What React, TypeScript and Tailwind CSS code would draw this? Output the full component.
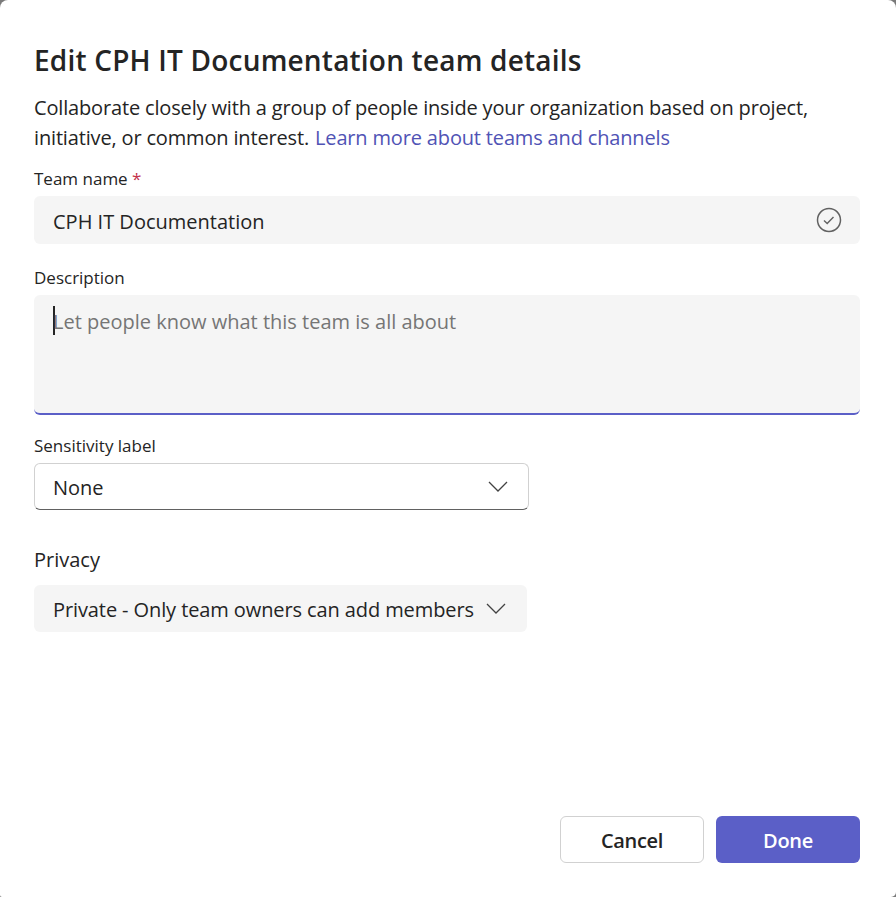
const font = "font-['Open_Sans','Noto_Sans',sans-serif]";

const CheckCircle = () => (
  <svg width="26" height="26" viewBox="0 0 26 26" fill="none" stroke="#616161">
    <circle cx="13" cy="13" r="11.5" strokeWidth="1.5" />
    <path d="M8 13.5l3.2 3.1 6.3-6.6" strokeWidth="1.4" />
  </svg>
);

const Chevron = () => (
  <svg width="20" height="11" viewBox="0 0 20 11" fill="none" stroke="#424242" strokeWidth="1.3">
    <path d="M1 1l9 9 9-9" />
  </svg>
);

export default function App() {
  return (
    <div className="h-[897px] w-[896px] bg-[#7a7a7a]">
      <div className={`flex h-full flex-col rounded-t-lg rounded-br-[5px] rounded-bl-[2px] bg-white pt-[41px] pr-[36px] pb-[34px] pl-[34px] text-[#242424] ${font}`}>
        <h1 className="text-[28px] leading-[38px] font-semibold tracking-[0.2px]">Edit CPH IT Documentation team details</h1>
        <p className="mt-[14px] text-[20px] leading-[30px] tracking-[-0.16px]">
          Collaborate closely with a group of people inside your organization based on project, initiative, or common interest.{" "}
          <span className="ml-[1px] text-[#5053b5]">Learn more about teams and channels</span>
        </p>

        <label className="mt-[14px] text-[17px] leading-[24px]">
          Team name <span className="text-[#c4314b]">*</span>
        </label>
        <div className="mt-[5px] flex h-[48px] items-center justify-between rounded-md bg-[#f5f5f5] pr-[18px] pl-[19px] text-[20px]">
          <span className="pt-[3px]">CPH IT Documentation</span>
          <CheckCircle />
        </div>

        <label className="mt-[22px] text-[17px] leading-[24px]">Description</label>
        <div className="mt-[5px] flex h-[120px] items-start rounded-md border-b-2 border-[#5b5fc7] bg-[#f5f5f5] pt-[11px] pl-[19px] text-[20px] leading-[30px] text-[#757575]">
          <span className="-mr-[2px] h-[29px] w-[2px] bg-[#242424]" />
          <span className="pt-[1px]">Let people know what this team is all about</span>
        </div>

        <label className="mt-[19px] text-[17px] leading-[24px]">Sensitivity label</label>
        <div className="mt-[5px] flex h-[47px] w-[495px] items-center justify-between rounded-md border border-[#d1d1d1] border-b-[#616161] pr-[20px] pl-[18px] text-[20px]">
          <span className="pt-[3px]">None</span>
          <Chevron />
        </div>

        <label className="mt-[35px] text-[20px] leading-[30px]">Privacy</label>
        <div className="mt-[10px] flex h-[47px] w-[493px] items-center justify-between rounded-md bg-[#f5f5f5] pr-[21px] pl-[19px] text-[20px] tracking-[-0.1px]">
          <span className="pt-[3px]">Private - Only team owners can add members</span>
          <Chevron />
        </div>

        <div className="mt-auto flex justify-end gap-3">
          <button className="h-[47px] w-[144px] rounded-md border border-[#d1d1d1] bg-white pt-[3px] text-[20px] font-semibold tracking-[-0.3px]">Cancel</button>
          <button className="h-[47px] w-[144px] rounded-md bg-[#5b5fc7] pt-[3px] text-[20px] font-semibold tracking-[-0.3px] text-white">Done</button>
        </div>
      </div>
    </div>
  );
}
